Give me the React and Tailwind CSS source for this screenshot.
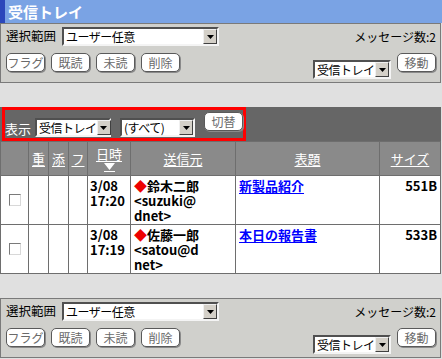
import React from "react";

const FONT = "font-['Noto_Sans_CJK_JP','Noto_Sans',sans-serif]";

function Arrow() {
  return (
    <div className="flex h-[15px] w-[14px] shrink-0 items-center justify-center border border-t-[#f0f0f0] border-l-[#f0f0f0] border-r-[#404040] border-b-[#404040] bg-[#d4d0c8]">
      <svg width="7" height="4" viewBox="0 0 7 4">
        <path d="M0 0h7L3.5 4z" fill="#000" />
      </svg>
    </div>
  );
}

function Select({ className, children }) {
  return (
    <div
      className={`flex h-[19px] shrink-0 items-center justify-between border-2 border-t-[#505050] border-l-[#505050] border-r-[#f4f4f4] border-b-[#f4f4f4] bg-white pl-[2px] text-[12px] leading-none text-black ${className}`}
    >
      <span className="whitespace-nowrap tracking-[-0.5px]">{children}</span>
      <Arrow />
    </div>
  );
}

function Btn({ children }) {
  return (
    <div className="flex h-[19px] w-[39px] shrink-0 items-center justify-center whitespace-nowrap rounded-[5px] border border-[#5a5a5a] bg-white text-[12px] leading-none text-[#6a6a6a] shadow-[1px_1px_0_#8a8a8a]">
      {children}
    </div>
  );
}

function ActionPanel() {
  return (
    <div className="h-[60px] w-[441px] border border-[#7a7a7a] bg-[#d0d0cc] px-[4px]">
      <div className="mt-[3px] flex h-[19px] items-center justify-between">
        <div className="flex items-center">
          <span className="w-[57px] shrink-0 whitespace-nowrap pl-[1px] text-[12.5px] leading-none text-black">選択範囲</span>
          <Select className="w-[157px]">ユーザー任意</Select>
        </div>
        <span className="whitespace-nowrap text-[12px] leading-none text-black">メッセージ数:2</span>
      </div>
      <div className="mt-[7px] flex items-start justify-between">
        <div className="ml-[1px] flex gap-[6px]">
          <Btn>フラグ</Btn>
          <Btn>既読</Btn>
          <Btn>未読</Btn>
          <Btn>削除</Btn>
        </div>
        <div className="flex items-start gap-[6px]">
          <Select className="mt-[7px] w-[78px]">受信トレイ</Select>
          <Btn>移動</Btn>
        </div>
      </div>
    </div>
  );
}

function HeadLink({ children }) {
  return <span className="whitespace-nowrap text-[13px] leading-none text-white underline underline-offset-2">{children}</span>;
}

function Check() {
  return <div className="h-[12px] w-[12px] border border-t-[#7a7a7a] border-l-[#7a7a7a] border-r-[#d8d8d8] border-b-[#d8d8d8] bg-white" />;
}

const rows = [
  { date: "3/08", time: "17:20", name: "鈴木二郎", mail: ["<suzuki@", "dnet>"], subject: "新製品紹介", size: "551B" },
  { date: "3/08", time: "17:19", name: "佐藤一郎", mail: ["<satou@d", "net>"], subject: "本日の報告書", size: "533B" },
];

export default function App() {
  return (
    <div className={`h-[359px] w-[442px] overflow-hidden bg-[#e0e0e0] ${FONT}`}>
      <div className="flex h-[23px] items-center bg-[#7aa3e4]">
        <div className="h-full w-[5px] bg-[#2b47bb]" />
        <span className="whitespace-nowrap pl-[3px] text-[15px] font-bold leading-none text-white">受信トレイ</span>
      </div>
      <ActionPanel />

      <div className="mt-[24px] h-[34px] w-[441px] bg-[#666666]">
        <div className="ml-[2px] flex h-[34px] w-[244px] items-end border-[3px] border-[#ff0000] pb-[1px]">
          <span className="mb-[2px] shrink-0 whitespace-nowrap text-[13px] leading-none text-white">表示</span>
          <Select className="ml-[4px] w-[76px]">受信トレイ</Select>
          <Select className="ml-[9px] w-[75px]">(すべて)</Select>
          <div className="mb-[6px] ml-[9px]">
            <Btn>切替</Btn>
          </div>
        </div>
      </div>

      <div className="grid w-[441px] grid-cols-[27px_19px_19px_18px_42px_104px_143px_60px] gap-px bg-[#6e6e6e] p-px">
        <div className="h-[33px] bg-[#8a8a8a]" />
        <div className="flex h-[33px] items-center justify-center bg-[#8a8a8a]"><HeadLink>重</HeadLink></div>
        <div className="flex h-[33px] items-center justify-center bg-[#8a8a8a]"><HeadLink>添</HeadLink></div>
        <div className="flex h-[33px] items-center justify-center bg-[#8a8a8a]"><HeadLink>フ</HeadLink></div>
        <div className="flex h-[33px] flex-col items-center bg-[#8a8a8a] pt-[5px]">
          <HeadLink>日時</HeadLink>
          <svg className="mt-[3px]" width="11" height="9" viewBox="0 0 11 9">
            <path d="M0 0h11L5.5 7z" fill="#fff" />
            <path d="M0 8h11v1H0z" fill="#fff" />
          </svg>
        </div>
        <div className="flex h-[33px] items-center justify-center bg-[#8a8a8a]"><HeadLink>送信元</HeadLink></div>
        <div className="flex h-[33px] items-center justify-center bg-[#8a8a8a]"><HeadLink>表題</HeadLink></div>
        <div className="flex h-[33px] items-center justify-center bg-[#8a8a8a]"><HeadLink>サイズ</HeadLink></div>

        {rows.map((r) => (
          <React.Fragment key={r.name}>
            <div className="flex h-[48px] items-center justify-center bg-white"><Check /></div>
            <div className="bg-white" />
            <div className="bg-white" />
            <div className="bg-white" />
            <div className="flex flex-col bg-white pl-[2px] pt-[2px] text-[13px] font-bold leading-[15px] text-black">
              <span>{r.date}</span>
              <span>{r.time}</span>
            </div>
            <div className="flex flex-col bg-white pl-[3px] pt-[2px] text-[13px] font-bold leading-[15px] text-black">
              <span className="whitespace-nowrap">
                <span className="text-[#ee0000]">◆</span>
                {r.name}
              </span>
              <span>{r.mail[0]}</span>
              <span>{r.mail[1]}</span>
            </div>
            <div className="bg-white pl-[3px] pt-[2px] text-[13px] font-bold leading-[15px]">
              <span className="whitespace-nowrap text-[#0000ff] underline underline-offset-2">{r.subject}</span>
            </div>
            <div className="bg-white pr-[3px] pt-[2px] text-right text-[13px] font-bold leading-[15px] text-black">{r.size}</div>
          </React.Fragment>
        ))}
      </div>

      <div className="mt-[24px]">
        <ActionPanel />
      </div>
    </div>
  );
}
